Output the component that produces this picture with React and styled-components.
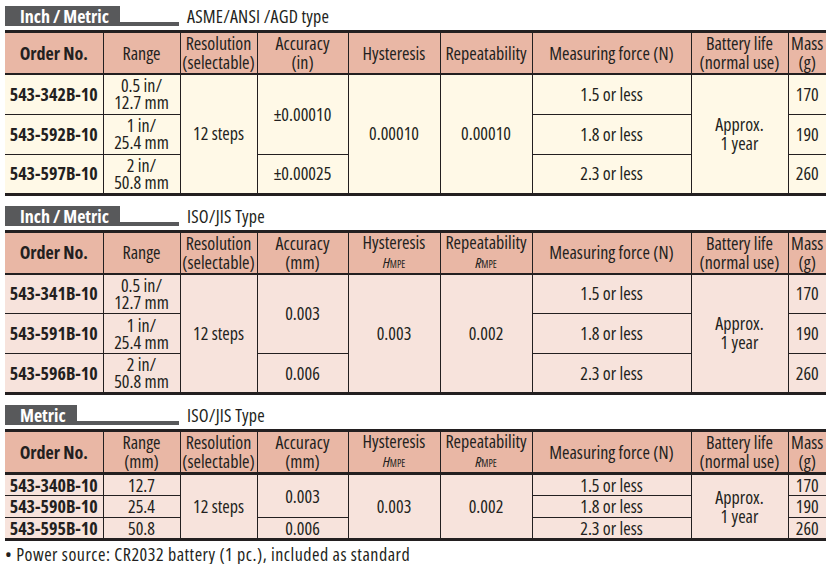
import React from 'react';
import styled, { createGlobalStyle } from 'styled-components';

const INK = '#231f20';

const GlobalStyle = createGlobalStyle`
  html, body { margin: 0; padding: 0; background: #fff; }
  body {
    font-family: "Open Sans", "Roboto Condensed", "Liberation Sans", sans-serif;
    font-stretch: 75%;
    color: ${INK};
  }
`;

const Page = styled.div`
  width: 829px;
  box-sizing: border-box;
  padding: 6px 3px 0 5px;
  display: flex;
  flex-direction: column;
`;

const Section = styled.section`
  display: flex;
  flex-direction: column;
  gap: 4px;
  & + & { margin-top: 10px; }
`;

const TitleBar = styled.div`
  display: flex;
  align-items: center;
  height: 20px;
`;

const TabTrack = styled.div`
  width: 174px;
  height: 20px;
  display: flex;
  align-items: flex-end;
`;

const Tab = styled.div`
  height: 20px;
  line-height: 20px;
  padding: 0 11px 0 15px;
  background: #58595b;
  color: #fff;
  font-weight: bold;
  font-size: 18px;
  white-space: nowrap;
`;

const TabRule = styled.div`
  flex: 1;
  height: 4px;
  background: #58595b;
`;

const Caption = styled.div`
  margin-left: 8px;
  font-size: 18px;
  line-height: 20px;
  letter-spacing: 0.2px;
`;

const Table = styled.table`
  width: 821px;
  border-collapse: collapse;
  table-layout: fixed;
  border-top: 3px solid ${INK};
  border-bottom: 3px solid ${INK};
`;

const HeadCell = styled.th`
  background: #e9b7a5;
  font-weight: ${p => (p.$bold ? 'bold' : 'normal')};
  font-size: 18px;
  line-height: 19px;
  text-align: center;
  vertical-align: middle;
  white-space: nowrap;
  padding: 0;
  height: 40px;
  border-left: 1px solid ${INK};
  border-right: 1px solid ${INK};
  border-bottom: ${p => (p.$thick ? 3 : 2)}px solid ${INK};
  &:first-child { border-left: none; }
  &:last-child { border-right: none; }
`;

const Cell = styled.td`
  background: ${p => p.$bg};
  font-weight: ${p => (p.$bold ? 'bold' : 'normal')};
  font-size: 18px;
  line-height: ${p => (p.$loose ? 19 : 17)}px;
  text-align: center;
  vertical-align: middle;
  padding: 0;
  border: 1px solid ${INK};
  white-space: nowrap;
  &:first-child { border-left: none; }
  &:last-child { border-right: none; }
`;

const BodyRow = styled.tr`
  height: ${p => p.$h}px;
`;

const Mpe = styled.span`
  display: inline-block;
  line-height: 17px;
  i { font-size: 15px; }
  small { font-size: 10px; }
`;

const Footnote = styled.p`
  margin: 3px 0 0;
  font-size: 18px;
  line-height: 20px;
  letter-spacing: 0.5px;
`;

const COLS = [98, 77, 77, 91, 92, 92, 159, 97, 38];

const CREAM = '#fff9e7';
const PINK = '#f7e3dc';

const tables = [
  {
    tab: 'Inch\u2009/\u2009Metric',
    caption: 'ASME/ANSI /AGD type',
    bg: CREAM,
    rowH: 40,
    thick: false,
    range: ['Range'],
    accUnit: '(in)',
    mpe: false,
    accuracy: [['±0.00010', 2], ['±0.00025', 1]],
    hysteresis: '0.00010',
    repeatability: '0.00010',
    rows: [
      ['543-342B-10', ['0.5 in/', '12.7 mm'], '1.5 or less', '170'],
      ['543-592B-10', ['1 in/', '25.4 mm'], '1.8 or less', '190'],
      ['543-597B-10', ['2 in/', '50.8 mm'], '2.3 or less', '260'],
    ],
  },
  {
    tab: 'Inch\u2009/\u2009Metric',
    caption: 'ISO/JIS Type',
    bg: PINK,
    rowH: 40,
    thick: false,
    range: ['Range'],
    accUnit: '(mm)',
    mpe: true,
    accuracy: [['0.003', 2], ['0.006', 1]],
    hysteresis: '0.003',
    repeatability: '0.002',
    rows: [
      ['543-341B-10', ['0.5 in/', '12.7 mm'], '1.5 or less', '170'],
      ['543-591B-10', ['1 in/', '25.4 mm'], '1.8 or less', '190'],
      ['543-596B-10', ['2 in/', '50.8 mm'], '2.3 or less', '260'],
    ],
  },
  {
    tab: 'Metric',
    caption: 'ISO/JIS Type',
    bg: PINK,
    rowH: 22,
    thick: true,
    range: ['Range', '(mm)'],
    accUnit: '(mm)',
    mpe: true,
    accuracy: [['0.003', 2], ['0.006', 1]],
    hysteresis: '0.003',
    repeatability: '0.002',
    rows: [
      ['543-340B-10', ['12.7'], '1.5 or less', '170'],
      ['543-590B-10', ['25.4'], '1.8 or less', '190'],
      ['543-595B-10', ['50.8'], '2.3 or less', '260'],
    ],
  },
];

const Lines = ({ items }) =>
  items.map((t, i) => (
    <React.Fragment key={i}>
      {i > 0 && <br />}
      {t}
    </React.Fragment>
  ));

const MpeLabel = ({ letter }) => (
  <Mpe>
    <i>{letter}</i>
    <small>MPE</small>
  </Mpe>
);

function SpecTable({ t }) {
  let accIndex = 0;
  const accStarts = {};
  t.accuracy.forEach(([v, span]) => {
    accStarts[accIndex] = [v, span];
    accIndex += span;
  });
  return (
    <Table>
      <colgroup>
        {COLS.map((w, i) => (
          <col key={i} style={{ width: w }} />
        ))}
      </colgroup>
      <thead>
        <tr>
          <HeadCell $bold $thick={t.thick}>Order No.</HeadCell>
          <HeadCell $thick={t.thick}><Lines items={t.range} /></HeadCell>
          <HeadCell $thick={t.thick}>Resolution<br />(selectable)</HeadCell>
          <HeadCell $thick={t.thick}>Accuracy<br />{t.accUnit}</HeadCell>
          <HeadCell $thick={t.thick}>
            Hysteresis
            {t.mpe && (<><br /><MpeLabel letter="H" /></>)}
          </HeadCell>
          <HeadCell $thick={t.thick}>
            Repeatability
            {t.mpe && (<><br /><MpeLabel letter="R" /></>)}
          </HeadCell>
          <HeadCell $thick={t.thick}>Measuring force (N)</HeadCell>
          <HeadCell $thick={t.thick}>Battery life<br />(normal use)</HeadCell>
          <HeadCell $thick={t.thick}>Mass<br />(g)</HeadCell>
        </tr>
      </thead>
      <tbody>
        {t.rows.map(([order, range, force, mass], i) => (
          <BodyRow key={order} $h={t.rowH}>
            <Cell $bg={t.bg} $bold>{order}</Cell>
            <Cell $bg={t.bg}><Lines items={range} /></Cell>
            {i === 0 && <Cell $bg={t.bg} rowSpan={3}>12 steps</Cell>}
            {accStarts[i] && (
              <Cell $bg={t.bg} rowSpan={accStarts[i][1]}>{accStarts[i][0]}</Cell>
            )}
            {i === 0 && <Cell $bg={t.bg} rowSpan={3}>{t.hysteresis}</Cell>}
            {i === 0 && <Cell $bg={t.bg} rowSpan={3}>{t.repeatability}</Cell>}
            <Cell $bg={t.bg}>{force}</Cell>
            {i === 0 && (
              <Cell $bg={t.bg} $loose rowSpan={3}>Approx.<br />1 year</Cell>
            )}
            <Cell $bg={t.bg}>{mass}</Cell>
          </BodyRow>
        ))}
      </tbody>
    </Table>
  );
}

export default function App() {
  return (
    <>
      <GlobalStyle />
      <Page>
        {tables.map((t, i) => (
          <Section key={i}>
            <TitleBar>
              <TabTrack>
                <Tab>{t.tab}</Tab>
                <TabRule />
              </TabTrack>
              <Caption>{t.caption}</Caption>
            </TitleBar>
            <SpecTable t={t} />
          </Section>
        ))}
        <Footnote>• Power source: CR2032 battery (1 pc.), included as standard</Footnote>
      </Page>
    </>
  );
}
